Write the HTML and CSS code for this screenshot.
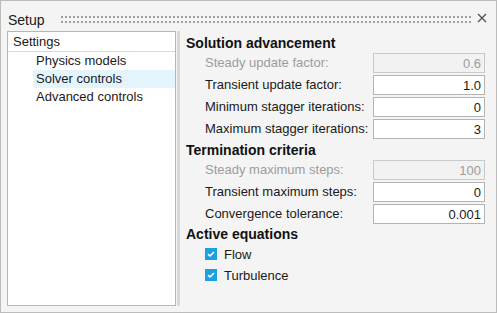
FILE: index.html
```html
<!DOCTYPE html>
<html lang="en">
<head>
    <meta charset="UTF-8">
    <title>Setup</title>
    <link rel="stylesheet" href="styles.css">
</head>
<body>
    <div class="window">
        <div class="titlebar">
            <span class="title">Setup</span>
            <svg class="grip" height="9">
                <defs>
                    <pattern id="dots" width="4" height="9" patternUnits="userSpaceOnUse">
                        <rect x="0" y="1" width="2" height="2" fill="#9e9e9e"/>
                        <rect x="0" y="6" width="2" height="2" fill="#9e9e9e"/>
                    </pattern>
                </defs>
                <rect width="100%" height="9" fill="url(#dots)"/>
            </svg>
            <svg class="close" width="10" height="10" viewBox="0 0 10 10">
                <path d="M1 1 L9 9 M9 1 L1 9" stroke="#505050" stroke-width="1.3"/>
            </svg>
        </div>

        <div class="main">
            <div class="tree">
                <div class="tree-head">Settings</div>
                <ul class="tree-list">
                    <li>Physics models</li>
                    <li class="selected">Solver controls</li>
                    <li>Advanced controls</li>
                </ul>
            </div>

            <div class="splitter"></div>

            <div class="panel">
                <section class="group">
                    <h2>Solution advancement</h2>
                    <div class="field disabled">
                        <label>Steady update factor:</label>
                        <input type="text" value="0.6" disabled>
                    </div>
                    <div class="field">
                        <label>Transient update factor:</label>
                        <input type="text" value="1.0">
                    </div>
                    <div class="field">
                        <label>Minimum stagger iterations:</label>
                        <input type="text" value="0">
                    </div>
                    <div class="field">
                        <label>Maximum stagger iterations:</label>
                        <input type="text" value="3">
                    </div>
                </section>

                <section class="group">
                    <h2>Termination criteria</h2>
                    <div class="field disabled">
                        <label>Steady maximum steps:</label>
                        <input type="text" value="100" disabled>
                    </div>
                    <div class="field">
                        <label>Transient maximum steps:</label>
                        <input type="text" value="0">
                    </div>
                    <div class="field">
                        <label>Convergence tolerance:</label>
                        <input type="text" value="0.001">
                    </div>
                </section>

                <section class="group checks">
                    <h2>Active equations</h2>
                    <div class="check-row">
                        <span class="check"><svg width="12" height="12" viewBox="0 0 12 12"><path d="M3 6.2 L5 8 L9 4" fill="none" stroke="#fff" stroke-width="1.6"/></svg></span>
                        <span>Flow</span>
                    </div>
                    <div class="check-row">
                        <span class="check"><svg width="12" height="12" viewBox="0 0 12 12"><path d="M3 6.2 L5 8 L9 4" fill="none" stroke="#fff" stroke-width="1.6"/></svg></span>
                        <span>Turbulence</span>
                    </div>
                </section>
            </div>
        </div>
    </div>
</body>
</html>
```

FILE: styles.css
```css
body {
    margin: 0;
    background-color: #f4f4f4;
    font-family: 'Liberation Sans', Arial, sans-serif;
    font-size: 13px;
    color: #1a1a1a;
}

.window {
    width: 497px;
    height: 313px;
    box-sizing: border-box;
    border: 1px solid #bcbcbc;
    background-color: #f4f4f4;
    display: flex;
    flex-direction: column;
}

/* title bar with grip dots and close button */
.titlebar {
    height: 30px;
    box-sizing: border-box;
    padding: 8px 9px 0 7px;
    display: flex;
    align-items: flex-start;
}

.title {
    font-size: 14px;
    line-height: 22px;
    color: #202020;
}

.grip {
    flex: 1;
    margin: 6px 5px 0 16px;
}

.close {
    margin-top: 4px;
}

.main {
    flex: 1;
    display: flex;
    padding: 0 11px 6px 6px;
    min-height: 0;
}

/* left tree */
.tree {
    width: 169px;
    box-sizing: border-box;
    border: 1px solid #b6b6b6;
    background-color: #fff;
}

.tree-head {
    height: 19px;
    line-height: 19px;
    padding-left: 5px;
    border-bottom: 1px solid #d8d8d8;
}

.tree-list {
    list-style: none;
    margin: 0;
    padding: 0;
}

.tree-list li {
    height: 18px;
    line-height: 18px;
    margin-left: 25px;
    padding-left: 3px;
}

.tree-list li.selected {
    background-color: #e3f4fc;
}

.splitter {
    width: 3px;
    margin-left: 1px;
    background-color: #d9d9d9;
}

/* right settings panel */
.panel {
    flex: 1;
    padding: 2px 0 0 6px;
}

.group h2 {
    margin: 0;
    height: 20px;
    line-height: 20px;
    font-size: 14px;
    font-weight: bold;
    color: #111;
}

.group + .group h2 {
    margin-top: -1px;
}

.group.checks h2 {
    margin-top: -2px;
}

.field {
    display: grid;
    grid-template-columns: 1fr 112px;
    height: 20px;
    margin-bottom: 2px;
    padding-left: 19px;
}

.field label {
    line-height: 20px;
    white-space: nowrap;
}

.field input {
    height: 20px;
    width: 112px;
    box-sizing: border-box;
    margin: 0;
    border: 1px solid #b4b4b4;
    background-color: #fff;
    padding: 0 3px;
    text-align: right;
    font-family: 'Liberation Sans', Arial, sans-serif;
    font-size: 13px;
    color: #1a1a1a;
    outline: none;
}

.field.disabled label {
    color: #9c9c9c;
}

.field.disabled input {
    background-color: #f2f2f2;
    border-color: #c9c9c9;
    color: #9c9c9c;
}

.check-row {
    display: flex;
    align-items: center;
    gap: 7px;
    height: 20px;
    margin-bottom: 1px;
    padding-left: 19px;
}

.check {
    width: 12px;
    height: 12px;
    background-color: #1ba1e2;
    display: flex;
}
```
